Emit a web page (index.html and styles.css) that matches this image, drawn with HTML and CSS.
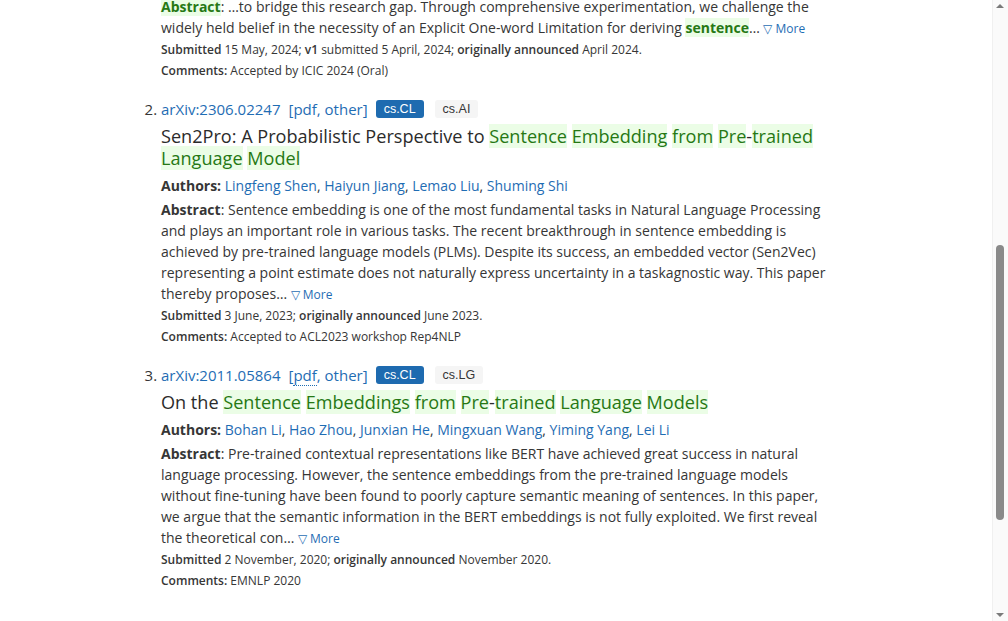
FILE: index.html
```html
<!DOCTYPE html>
<html lang="en">
<head>
<meta charset="utf-8">
<title>arXiv search results</title>
<link rel="stylesheet" href="styles.css">
</head>
<body>
<main class="results">
  <div class="result result-partial">
    <p class="abstract"><span class="label hit">Abstract</span>: …to bridge this research gap. Through comprehensive experimentation, we challenge the widely held belief in the necessity of an Explicit One-word Limitation for deriving <span class="hit strong">sentence</span>… <a class="more" href="#">▽ More</a></p>
    <p class="meta"><span class="label">Submitted</span> 15 May, 2024; <span class="label">v1</span> submitted 5 April, 2024; <span class="label">originally announced</span> April 2024.</p>
    <p class="meta"><span class="label">Comments:</span> Accepted by ICIC 2024 (Oral)</p>
  </div>
  <ol class="list" start="2">
    <li class="result">
      <div class="list-title">
        <a href="#">arXiv:2306.02247</a>
        <span class="links">[<a href="#">pdf</a>, <a href="#">other</a>]</span>
        <span class="tag tag-primary">cs.CL</span>
        <span class="tag">cs.AI</span>
      </div>
      <p class="title">Sen2Pro: A Probabilistic Perspective to <span class="hit">Sentence</span> <span class="hit">Embedding</span> <span class="hit">from</span> <span class="hit">Pre</span>-<span class="hit">trained</span> <span class="hit">Language</span> <span class="hit">Model</span></p>
      <p class="authors"><span class="label">Authors:</span> <a href="#">Lingfeng Shen</a>, <a href="#">Haiyun Jiang</a>, <a href="#">Lemao Liu</a>, <a href="#">Shuming Shi</a></p>
      <p class="abstract"><span class="label">Abstract</span>: Sentence embedding is one of the most fundamental tasks in Natural Language Processing and plays an important role in various tasks. The recent breakthrough in sentence embedding is achieved by pre-trained language models (PLMs). Despite its success, an embedded vector (Sen2Vec) representing a point estimate does not naturally express uncertainty in a taskagnostic way. This paper thereby proposes… <a class="more" href="#">▽ More</a></p>
      <p class="meta"><span class="label">Submitted</span> 3 June, 2023; <span class="label">originally announced</span> June 2023.</p>
      <p class="meta"><span class="label">Comments:</span> Accepted to ACL2023 workshop Rep4NLP</p>
    </li>
    <li class="result">
      <div class="list-title">
        <a href="#">arXiv:2011.05864</a>
        <span class="links">[<a class="dotted" href="#">pdf</a>, <a href="#">other</a>]</span>
        <span class="tag tag-primary">cs.CL</span>
        <span class="tag">cs.LG</span>
      </div>
      <p class="title">On the <span class="hit">Sentence</span> <span class="hit">Embeddings</span> <span class="hit">from</span> <span class="hit">Pre</span>-<span class="hit">trained</span> <span class="hit">Language</span> <span class="hit">Models</span></p>
      <p class="authors"><span class="label">Authors:</span> <a href="#">Bohan Li</a>, <a href="#">Hao Zhou</a>, <a href="#">Junxian He</a>, <a href="#">Mingxuan Wang</a>, <a href="#">Yiming Yang</a>, <a href="#">Lei Li</a></p>
      <p class="abstract"><span class="label">Abstract</span>: Pre-trained contextual representations like BERT have achieved great success in natural language processing. However, the sentence embeddings from the pre-trained language models without fine-tuning have been found to poorly capture semantic meaning of sentences. In this paper, we argue that the semantic information in the BERT embeddings is not fully exploited. We first reveal the theoretical con… <a class="more" href="#">▽ More</a></p>
      <p class="meta"><span class="label">Submitted</span> 2 November, 2020; <span class="label">originally announced</span> November 2020.</p>
      <p class="meta"><span class="label">Comments:</span> EMNLP 2020</p>
    </li>
  </ol>
</main>
<div class="scrollbar" aria-hidden="true">
  <span class="arrow arrow-up"></span>
  <span class="thumb"></span>
  <span class="arrow arrow-down"></span>
</div>
</body>
</html>
```

FILE: styles.css
```css
html, body {
  margin: 0;
  padding: 0;
  overflow: hidden;
  background: #ffffff;
}
body {
  font-family: "Open Sans", "Noto Sans", sans-serif;
  color: #363636;
}
a {
  color: #1f6db4;
  text-decoration: none;
}
p { margin: 0; }

.results {
  width: 670px;
  padding-left: 161px;
}
.result-partial {
  margin-top: -4px;
}
.list {
  margin: 0;
  padding: 0;
}
.list > li {
  font-size: 15px;
}
.result {
  margin-bottom: 17px;
}
.list-title {
  font-size: 15px;
  line-height: 22px;
  display: flex;
  align-items: center;
  gap: 8px;
}
.links {
  color: #1f6db4;
}
.dotted { border-bottom: 1px dotted #1f6db4; }
.tag {
  font-family: "Liberation Sans", Arial, sans-serif;
  font-size: 12.5px;
  line-height: 18px;
  padding: 0 8px;
  border-radius: 3px;
  background: #f5f5f5;
  color: #363636;
  margin-right: 3px;
}
.tag-primary {
  background: #1e6bb0;
  color: #ffffff;
}
.title {
  font-size: 18.1px;
  line-height: 22px;
  margin-top: 5px;
  margin-bottom: 6px;
  color: #2b2b2b;
}
.authors {
  font-size: 14px;
  line-height: 21px;
  margin-bottom: 3px;
}
.abstract {
  font-size: 14px;
  line-height: 21px;
}
.meta {
  font-size: 12px;
  line-height: 21px;
}
.label {
  font-weight: 700;
}
.meta .label { font-weight: 600; }
.more {
  font-size: 12px;
}
.hit {
  background: #ebfde6;
  color: #267814;
}
.strong { font-weight: 700; }

.scrollbar {
  position: fixed;
  top: 0;
  right: 0;
  width: 15px;
  height: 100%;
  background: #fafafa;
  border-left: 1px solid #f0f0f0;
}
.thumb {
  position: absolute;
  left: 3px;
  top: 245px;
  width: 8px;
  height: 275px;
  border-radius: 4px;
  background: #8a8a8a;
}
.arrow {
  position: absolute;
  left: 3px;
  width: 0;
  height: 0;
  border-left: 4px solid transparent;
  border-right: 4px solid transparent;
}
.arrow-up {
  top: 4px;
  border-bottom: 4px solid #7a7a7a;
}
.arrow-down {
  bottom: 4px;
  border-top: 4px solid #7a7a7a;
}
```
